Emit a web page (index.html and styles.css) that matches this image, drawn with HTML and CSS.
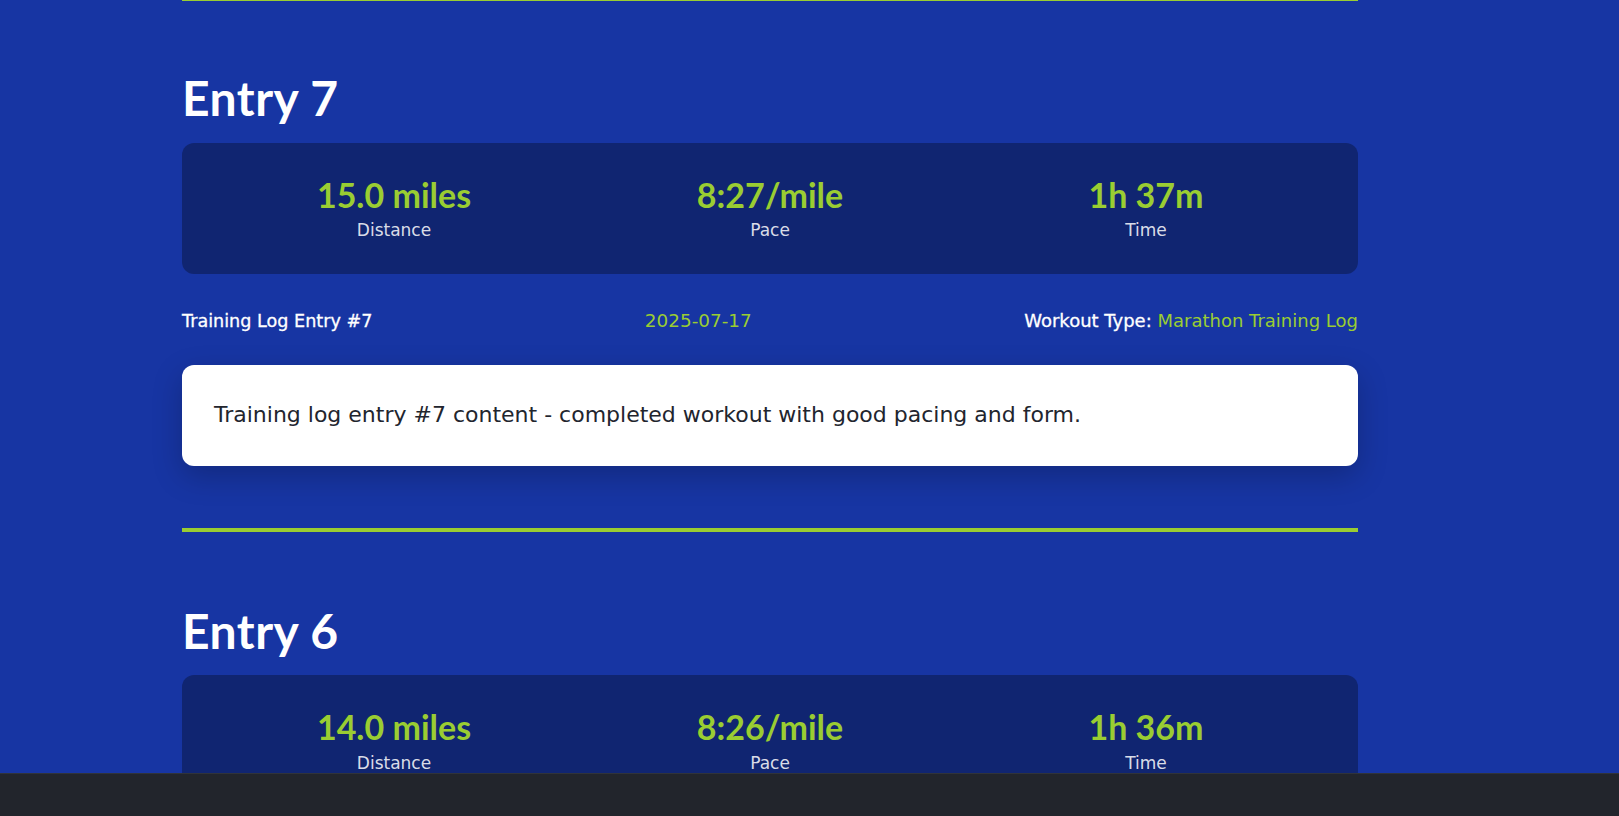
FILE: index.html
```html
<!DOCTYPE html>
<html lang="en">
<head>
<meta charset="utf-8">
<title>Marathon Training Log</title>
<link rel="stylesheet" href="styles.css">
</head>
<body>
<main class="page">
  <div class="divider-tail"></div>

  <article class="entry">
    <h2 class="entry-title">Entry 7</h2>
    <div class="stats">
      <div class="stat">
        <div class="stat-value">15.0 miles</div>
        <div class="stat-label">Distance</div>
      </div>
      <div class="stat">
        <div class="stat-value">8:27/mile</div>
        <div class="stat-label">Pace</div>
      </div>
      <div class="stat">
        <div class="stat-value">1h 37m</div>
        <div class="stat-label">Time</div>
      </div>
    </div>
    <div class="meta">
      <span class="meta-title">Training Log Entry #7</span>
      <span class="meta-date">2025-07-17</span>
      <span class="meta-type"><span class="meta-key">Workout Type:</span> <span class="meta-val">Marathon Training Log</span></span>
    </div>
    <div class="content">
      <p>Training log entry #7 content - completed workout with good pacing and form.</p>
    </div>
  </article>

  <article class="entry">
    <h2 class="entry-title">Entry 6</h2>
    <div class="stats">
      <div class="stat">
        <div class="stat-value">14.0 miles</div>
        <div class="stat-label">Distance</div>
      </div>
      <div class="stat">
        <div class="stat-value">8:26/mile</div>
        <div class="stat-label">Pace</div>
      </div>
      <div class="stat">
        <div class="stat-value">1h 36m</div>
        <div class="stat-label">Time</div>
      </div>
    </div>
    <div class="meta">
      <span class="meta-title">Training Log Entry #6</span>
      <span class="meta-date">2025-07-16</span>
      <span class="meta-type"><span class="meta-key">Workout Type:</span> <span class="meta-val">Marathon Training Log</span></span>
    </div>
    <div class="content">
      <p>Training log entry #6 content - completed workout with good pacing and form.</p>
    </div>
  </article>
</main>
<div class="bottom-bar"></div>
</body>
</html>
```

FILE: styles.css
```css
html, body {
  margin: 0;
  padding: 0;
}

body {
  background: #1735a3;
  color: #ffffff;
  font-family: "DejaVu Sans", "Noto Sans", sans-serif;
  overflow: hidden;
}

.page {
  width: 1176px;
  margin: 0 0 0 182px;
}

.divider-tail {
  border-top: 4px solid #9acd32;
  margin-top: -3px;
}

.entry {
  padding: 68px 0 62px;
  border-bottom: 4px solid #9acd32;
}

.entry + .entry {
  padding-top: 70px;
}

.entry-title {
  font-family: "Lato", "DejaVu Sans", sans-serif;
  font-weight: 700;
  font-size: 48px;
  letter-spacing: 0.5px;
  line-height: 1.2;
  margin: 0 0 16px;
  color: #ffffff;
}

.stats {
  display: grid;
  grid-template-columns: repeat(3, 1fr);
  gap: 16px;
  padding: 33px 32px 31px;
  background: rgba(0, 0, 0, 0.3);
  border-radius: 12px;
  text-align: center;
}

.stat-value {
  font-family: "Lato", "DejaVu Sans", sans-serif;
  font-weight: 700;
  font-size: 34px;
  line-height: 1.1;
  color: #9acd32;
  margin-bottom: 5px;
}

.stat-label {
  font-size: 17px;
  line-height: 1.5;
  color: rgba(255, 255, 255, 0.86);
}

.meta {
  display: flex;
  justify-content: space-between;
  align-items: baseline;
  margin: 32px 0 29px;
  font-size: 18px;
  line-height: 1.6;
}

.meta-title {
  font-size: 17.6px;
}

.meta-title,
.meta-key {
  color: #ffffff;
  -webkit-text-stroke: 0.3px #ffffff;
}

.meta-date,
.meta-val {
  color: #9acd32;
}

.meta-date {
  font-size: 18.4px;
}

.content {
  background: #ffffff;
  color: #22252e;
  border-radius: 12px;
  padding: 32px;
  box-shadow: 0 10px 30px rgba(0, 0, 0, 0.22);
}

.content p {
  margin: 0;
  font-size: 22px;
  line-height: 1.65;
}

.bottom-bar {
  position: fixed;
  left: 0;
  right: 0;
  bottom: 0;
  height: 43px;
  background: #22252c;
  border-top: 1px solid #30333a;
  box-sizing: border-box;
}
```
